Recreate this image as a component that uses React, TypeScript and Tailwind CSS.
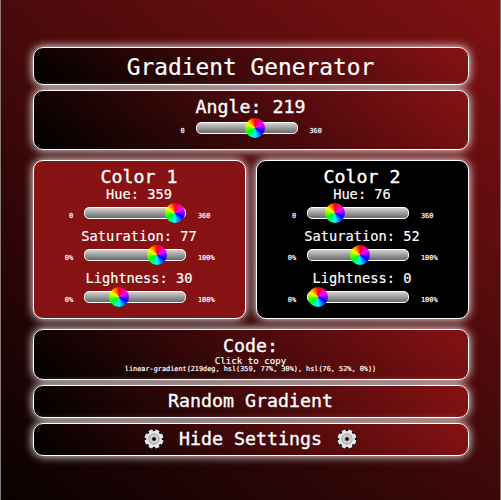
import React from "react";

const PANEL =
  "rounded-[10px] border border-white bg-[linear-gradient(219deg,hsl(359,77%,30%),hsl(76,52%,0%))] shadow-[0_0_10px_#fff]";

const HEADING = "text-[18.27px] leading-[21px] [-webkit-text-stroke:0.35px_#fff]";

function Slider({ value, max, unit = "" }: { value: number; max: number; unit?: string }) {
  return (
    <div className="flex h-5 items-center justify-center pr-2 text-[6.85px] leading-[8px] [-webkit-text-stroke:0.2px_#fff]">
      <span className="mt-[5px] w-[41px] pr-[11px] text-right">0{unit}</span>
      <div className="h-3 w-[102px] rounded-[5px] border border-white bg-linear-to-b from-[#d3d3d3] to-[#696969]">
        <div
          className="-mt-[5px] size-5 rounded-full bg-[conic-gradient(red,magenta,blue,aqua,lime,yellow,red)]"
          style={{ marginLeft: (value / max) * 80 }}
        />
      </div>
      <span className="mt-[5px] w-[41px] pl-[12px] text-left">
        {max}
        {unit}
      </span>
    </div>
  );
}

function Field({ label, value, max, unit }: { label: string; value: number; max: number; unit?: string }) {
  return (
    <div className="mb-[6px]">
      <div className="h-4 text-[13.7px] leading-[14px] [-webkit-text-stroke:0.15px_#fff]">
        {label}: {value}
      </div>
      <Slider value={value} max={max} unit={unit} />
    </div>
  );
}

function ColorCard({ name, color, hsl }: { name: string; color: string; hsl: [number, number, number] }) {
  return (
    <div className={"h-[159px] w-[213px] rounded-[10px] border border-white pt-[5px] shadow-[0_0_10px_#fff] " + color}>
      <h2 className={"h-[21px] " + HEADING}>{name}</h2>
      <Field label="Hue" value={hsl[0]} max={360} />
      <Field label="Saturation" value={hsl[1]} max={100} unit="%" />
      <Field label="Lightness" value={hsl[2]} max={100} unit="%" />
    </div>
  );
}

function Gear() {
  return (
    <svg viewBox="0 0 20 20" className="size-5">
      <g stroke="#000" strokeWidth="1.6" strokeLinejoin="round" fill="#000">
        <circle cx="10" cy="10" r="8" />
        {[22.5, 67.5, 112.5, 157.5].map((a) => (
          <rect key={a} x="7.8" y="0.7" width="4.4" height="18.6" rx="0.6" transform={`rotate(${a} 10 10)`} />
        ))}
      </g>
      <g fill="#e6e6e6">
        <circle cx="10" cy="10" r="7.9" />
        {[22.5, 67.5, 112.5, 157.5].map((a) => (
          <rect key={a} x="7.8" y="0.5" width="4.4" height="19" rx="0.6" transform={`rotate(${a} 10 10)`} />
        ))}
      </g>
      <circle cx="10" cy="10" r="5.2" fill="#d0d0d0" stroke="#929292" strokeWidth="0.8" />
      <circle cx="10" cy="10" r="2.1" fill="#000" stroke="#999" strokeWidth="0.5" />
    </svg>
  );
}

export default function App() {
  return (
    <main className="flex h-[500px] w-[501px] flex-col items-center border-x border-[#8a7a7a] bg-[linear-gradient(219deg,hsl(359,77%,28%),hsl(359,77%,2%))] pt-[47px] text-center font-['DejaVu_Sans_Mono',monospace] text-white">
      <div className="flex w-[436px] flex-col">
        <h1 className={"h-[38px] pt-[4px] text-[22.84px] leading-[30px] [-webkit-text-stroke:0.2px_#fff] " + PANEL}>
          Gradient Generator
        </h1>
        <section className={"mt-[5px] h-[60px] pt-[5px] " + PANEL}>
          <h2 className={"h-[22px] " + HEADING}>Angle: 219</h2>
          <Slider value={219} max={360} />
        </section>
        <div className="mt-[10px] flex justify-between">
          <ColorCard name="Color 1" color="bg-[hsl(359,77%,30%)]" hsl={[359, 77, 30]} />
          <ColorCard name="Color 2" color="bg-black" hsl={[76, 52, 0]} />
        </div>
        <section className={"mt-[10px] h-[51px] pt-[5px] " + PANEL}>
          <h2 className={"h-[21px] " + HEADING}>Code:</h2>
          <p className="h-[9px] text-[9.14px] leading-[11px] [-webkit-text-stroke:0.15px_#fff]">Click to copy</p>
          <p className="text-[6.85px] leading-[9px] [-webkit-text-stroke:0.2px_#fff]">
            linear-gradient(219deg, hsl(359, 77%, 30%), hsl(76, 52%, 0%))
          </p>
        </section>
        <button className={"mt-[5px] h-[33px] pb-[2px] " + HEADING + " " + PANEL}>Random Gradient</button>
        <button
          className={"mt-[5px] flex h-[33px] items-center justify-center gap-[15px] pb-[2px] " + HEADING + " " + PANEL}
        >
          <Gear />
          Hide Settings
          <Gear />
        </button>
      </div>
    </main>
  );
}
